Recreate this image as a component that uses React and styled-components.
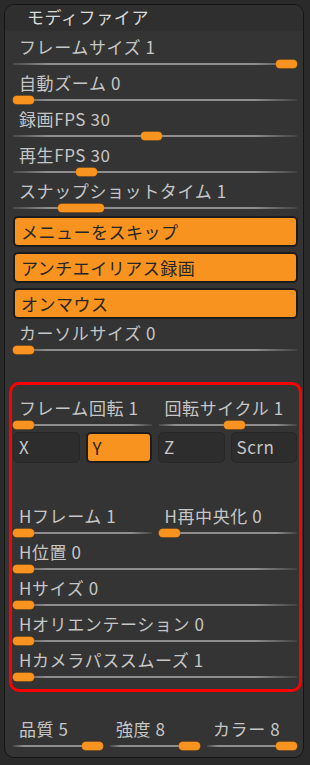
import styled, { createGlobalStyle } from 'styled-components'

const GlobalStyle = createGlobalStyle`
  html, body {
    margin: 0;
    padding: 0;
    background: #2a2a2a;
  }
  body {
    font-family: "Noto Sans CJK JP", "Noto Sans", sans-serif;
  }
`

const Panel = styled.div`
  margin: 4px 6px 0 4px;
  height: 754px;
  box-sizing: border-box;
  background: #343434;
  border: 1.5px solid #151515;
  border-radius: 10px;
  overflow: hidden;
  display: flex;
  flex-direction: column;
`

const Header = styled.div`
  height: 26px;
  line-height: 24px;
  padding-left: 22px;
  background: #2f2f2f;
  color: #dadada;
  font-size: 17px;
  letter-spacing: 0.6px;
`

const Body = styled.div`
  padding: 2px 5px 0 8px;
  display: flex;
  flex-direction: column;
`

const Row = styled.div`
  height: 36px;
  display: flex;
  flex-direction: column;
`

const Label = styled.div`
  height: 22px;
  line-height: 22px;
  padding: 3px 0 0 6px;
  color: #c6c6c6;
  font-size: 17px;
  letter-spacing: 0.6px;
  white-space: nowrap;
`

const TrackZone = styled.div`
  position: relative;
  height: 11px;
  margin-right: 1px;
`

const Track = styled.div`
  position: absolute;
  left: 0;
  right: 0;
  top: 5px;
  height: 2px;
  background: linear-gradient(
    to right,
    rgba(150, 150, 150, 0.2),
    #8e8e8e 12%,
    #8e8e8e 85%,
    rgba(150, 150, 150, 0.15)
  );
`

const Thumb = styled.div`
  position: absolute;
  top: 2px;
  height: 8px;
  width: ${p => p.$w}px;
  border-radius: 4px;
  background: #f7931e;
  box-shadow: 0 0 0 0.5px #c46e0c;
`

const Cols = styled.div`
  display: grid;
  grid-template-columns: ${p => p.$cols};
  column-gap: ${p => p.$gap}px;
`

const ToggleList = styled.div`
  display: flex;
  flex-direction: column;
  gap: 5px;
  margin: 3px 0 0;
`

const Toggle = styled.div`
  height: 31px;
  box-sizing: border-box;
  border-radius: 5px;
  font-size: 17px;
  letter-spacing: 0.5px;
  line-height: 27px;
  padding-left: ${p => p.$pad || 6}px;
  white-space: nowrap;
  background: ${p => (p.$on ? '#f7931e' : '#2d2d2d')};
  border: ${p => (p.$on ? '2px solid #1c1c1c' : '1px solid #272727')};
  color: ${p => (p.$on ? '#262626' : '#c6c6c6')};
`

const RedBox = styled.div`
  margin: 27px -4px 0 -4px;
  padding: 9px 1px 0 1px;
  height: 310px;
  box-sizing: border-box;
  border: 3px solid #ff0000;
  border-radius: 10px;
`

const AxisRow = styled.div`
  display: grid;
  grid-template-columns: repeat(4, 1fr);
  column-gap: 6px;
  margin: 2px 1px 39px 0;
`

const BottomRow = styled.div`
  margin-top: 23px;
`

function Slider({ label, value = 0, thumb = 21 }) {
  return (
    <Row>
      <Label>{label}</Label>
      <TrackZone>
        <Track />
        <Thumb $w={thumb} style={{ left: `calc((100% - ${thumb}px) * ${value})` }} />
      </TrackZone>
    </Row>
  )
}

export default function App() {
  return (
    <>
      <GlobalStyle />
      <Panel>
        <Header>モディファイア</Header>
        <Body>
          <Slider label="フレームサイズ 1" value={1} />
          <Slider label="自動ズーム 0" value={0} />
          <Slider label="録画FPS 30" value={0.485} />
          <Slider label="再生FPS 30" value={0.24} />
          <Slider label="スナップショットタイム 1" value={0.19} thumb={46} />
          <ToggleList>
            <Toggle $on>メニューをスキップ</Toggle>
            <Toggle $on>アンチエイリアス録画</Toggle>
            <Toggle $on>オンマウス</Toggle>
          </ToggleList>
          <Slider label="カーソルサイズ 0" value={0} />

          <RedBox>
            <Cols $cols="1fr 1fr" $gap={6}>
              <Slider label="フレーム回転 1" value={0} />
              <Slider label="回転サイクル 1" value={0.56} />
            </Cols>
            <AxisRow>
              <Toggle $pad={5}>X</Toggle>
              <Toggle $on $pad={5}>Y</Toggle>
              <Toggle $pad={5}>Z</Toggle>
              <Toggle $pad={5}>Scrn</Toggle>
            </AxisRow>
            <Cols $cols="1fr 1fr" $gap={6}>
              <Slider label="Hフレーム 1" value={0} />
              <Slider label="H再中央化 0" value={0} />
            </Cols>
            <Slider label="H位置 0" value={0} />
            <Slider label="Hサイズ 0" value={0} />
            <Slider label="Hオリエンテーション 0" value={0} />
            <Slider label="Hカメラパススムーズ 1" value={0} />
          </RedBox>

          <BottomRow>
            <Cols $cols="1fr 1fr 1fr" $gap={6}>
              <Slider label="品質 5" value={1} />
              <Slider label="強度 8" value={1} />
              <Slider label="カラー 8" value={1} />
            </Cols>
          </BottomRow>
        </Body>
      </Panel>
    </>
  )
}
